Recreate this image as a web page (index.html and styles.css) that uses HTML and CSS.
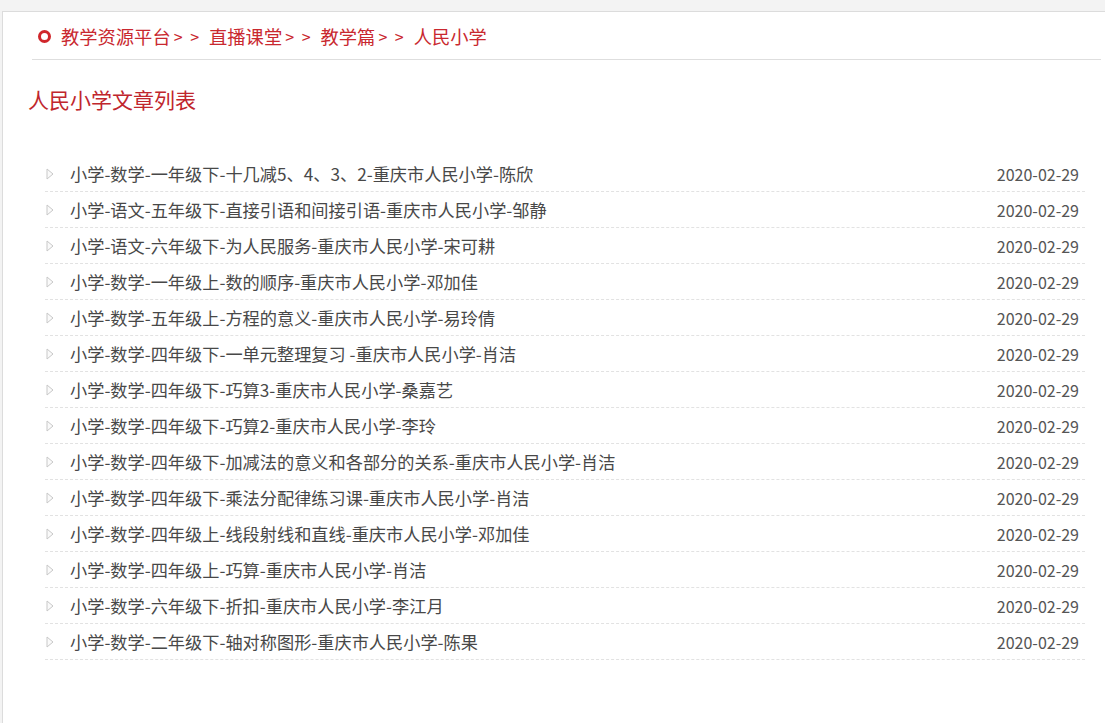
FILE: index.html
```html
<!DOCTYPE html>
<html lang="zh-CN">
<head>
  <meta charset="UTF-8" />
  <title>人民小学文章列表</title>
  <link rel="stylesheet" href="styles.css">
</head>
<body>

  <div class="panel">
    <div class="crumb">
      <span class="ring"></span>
      <a href="#">教学资源平台</a><span class="sep">&gt; &gt;</span>
      <a href="#">直播课堂</a><span class="sep">&gt; &gt;</span>
      <a href="#">教学篇</a><span class="sep">&gt; &gt;</span>
      <a href="#">人民小学</a>
    </div>

    <h2 class="title">人民小学文章列表</h2>

    <ul class="list">
      <li><svg class="arrow" width="8" height="12" viewBox="0 0 8 12"><path d="M1 1 L7 6 L1 11 Z" fill="#fafafa" stroke="#c8c8c8" stroke-width="1"/></svg><a href="#">小学-数学-一年级下-十几减5、4、3、2-重庆市人民小学-陈欣</a><span class="date">2020-02-29</span></li>
      <li><svg class="arrow" width="8" height="12" viewBox="0 0 8 12"><path d="M1 1 L7 6 L1 11 Z" fill="#fafafa" stroke="#c8c8c8" stroke-width="1"/></svg><a href="#">小学-语文-五年级下-直接引语和间接引语-重庆市人民小学-邹静</a><span class="date">2020-02-29</span></li>
      <li><svg class="arrow" width="8" height="12" viewBox="0 0 8 12"><path d="M1 1 L7 6 L1 11 Z" fill="#fafafa" stroke="#c8c8c8" stroke-width="1"/></svg><a href="#">小学-语文-六年级下-为人民服务-重庆市人民小学-宋可耕</a><span class="date">2020-02-29</span></li>
      <li><svg class="arrow" width="8" height="12" viewBox="0 0 8 12"><path d="M1 1 L7 6 L1 11 Z" fill="#fafafa" stroke="#c8c8c8" stroke-width="1"/></svg><a href="#">小学-数学-一年级上-数的顺序-重庆市人民小学-邓加佳</a><span class="date">2020-02-29</span></li>
      <li><svg class="arrow" width="8" height="12" viewBox="0 0 8 12"><path d="M1 1 L7 6 L1 11 Z" fill="#fafafa" stroke="#c8c8c8" stroke-width="1"/></svg><a href="#">小学-数学-五年级上-方程的意义-重庆市人民小学-易玲倩</a><span class="date">2020-02-29</span></li>
      <li><svg class="arrow" width="8" height="12" viewBox="0 0 8 12"><path d="M1 1 L7 6 L1 11 Z" fill="#fafafa" stroke="#c8c8c8" stroke-width="1"/></svg><a href="#">小学-数学-四年级下-一单元整理复习 -重庆市人民小学-肖洁</a><span class="date">2020-02-29</span></li>
      <li><svg class="arrow" width="8" height="12" viewBox="0 0 8 12"><path d="M1 1 L7 6 L1 11 Z" fill="#fafafa" stroke="#c8c8c8" stroke-width="1"/></svg><a href="#">小学-数学-四年级下-巧算3-重庆市人民小学-桑嘉艺</a><span class="date">2020-02-29</span></li>
      <li><svg class="arrow" width="8" height="12" viewBox="0 0 8 12"><path d="M1 1 L7 6 L1 11 Z" fill="#fafafa" stroke="#c8c8c8" stroke-width="1"/></svg><a href="#">小学-数学-四年级下-巧算2-重庆市人民小学-李玲</a><span class="date">2020-02-29</span></li>
      <li><svg class="arrow" width="8" height="12" viewBox="0 0 8 12"><path d="M1 1 L7 6 L1 11 Z" fill="#fafafa" stroke="#c8c8c8" stroke-width="1"/></svg><a href="#">小学-数学-四年级下-加减法的意义和各部分的关系-重庆市人民小学-肖洁</a><span class="date">2020-02-29</span></li>
      <li><svg class="arrow" width="8" height="12" viewBox="0 0 8 12"><path d="M1 1 L7 6 L1 11 Z" fill="#fafafa" stroke="#c8c8c8" stroke-width="1"/></svg><a href="#">小学-数学-四年级下-乘法分配律练习课-重庆市人民小学-肖洁</a><span class="date">2020-02-29</span></li>
      <li><svg class="arrow" width="8" height="12" viewBox="0 0 8 12"><path d="M1 1 L7 6 L1 11 Z" fill="#fafafa" stroke="#c8c8c8" stroke-width="1"/></svg><a href="#">小学-数学-四年级上-线段射线和直线-重庆市人民小学-邓加佳</a><span class="date">2020-02-29</span></li>
      <li><svg class="arrow" width="8" height="12" viewBox="0 0 8 12"><path d="M1 1 L7 6 L1 11 Z" fill="#fafafa" stroke="#c8c8c8" stroke-width="1"/></svg><a href="#">小学-数学-四年级上-巧算-重庆市人民小学-肖洁</a><span class="date">2020-02-29</span></li>
      <li><svg class="arrow" width="8" height="12" viewBox="0 0 8 12"><path d="M1 1 L7 6 L1 11 Z" fill="#fafafa" stroke="#c8c8c8" stroke-width="1"/></svg><a href="#">小学-数学-六年级下-折扣-重庆市人民小学-李江月</a><span class="date">2020-02-29</span></li>
      <li><svg class="arrow" width="8" height="12" viewBox="0 0 8 12"><path d="M1 1 L7 6 L1 11 Z" fill="#fafafa" stroke="#c8c8c8" stroke-width="1"/></svg><a href="#">小学-数学-二年级下-轴对称图形-重庆市人民小学-陈果</a><span class="date">2020-02-29</span></li>
    </ul>
  </div>

</body>
</html>
```

FILE: styles.css
```css
body {
  margin: 0;
  background-color: #f3f3f3;
  font-family: "Noto Sans CJK SC", "Liberation Sans", sans-serif;
}

a {
  text-decoration: none;
  color: inherit;
}

.panel {
  margin: 11px 0 0 2px;
  height: 712px;
  box-sizing: border-box;
  background: #fff;
  border-top: 1px solid #dcdcdc;
  border-left: 1px solid #dcdcdc;
}

.crumb {
  display: flex;
  align-items: center;
  height: 47px;
  margin-left: 29px;
  margin-right: 4px;
  padding-left: 6px;
  border-bottom: 1px solid #dedede;
  font-size: 18.3px;
  color: #c9282f;
}

.ring {
  width: 7px;
  height: 7px;
  border: 3px solid #d0262b;
  border-radius: 50%;
  margin-right: 10px;
  margin-top: 1px;
}

.sep {
  margin: 0 8px 0 3px;
  letter-spacing: 2px;
  font-size: 16px;
}

.title {
  margin: 27px 0 0 25px;
  font-size: 21px;
  line-height: 24px;
  font-weight: normal;
  color: #c0262d;
}

.list {
  list-style: none;
  margin: 45px 0 0 42px;
  padding: 0;
  width: 1040px;
}

.list li {
  display: flex;
  align-items: center;
  height: 35px;
  border-bottom: 1px dashed #e2e2e2;
  font-size: 17.2px;
  color: #484848;
}

.arrow {
  margin: 0 16px 0 1px;
}

.list a {
  flex: 1;
}

.date {
  font-size: 16px;
  color: #555;
  padding-right: 6px;
}
```
